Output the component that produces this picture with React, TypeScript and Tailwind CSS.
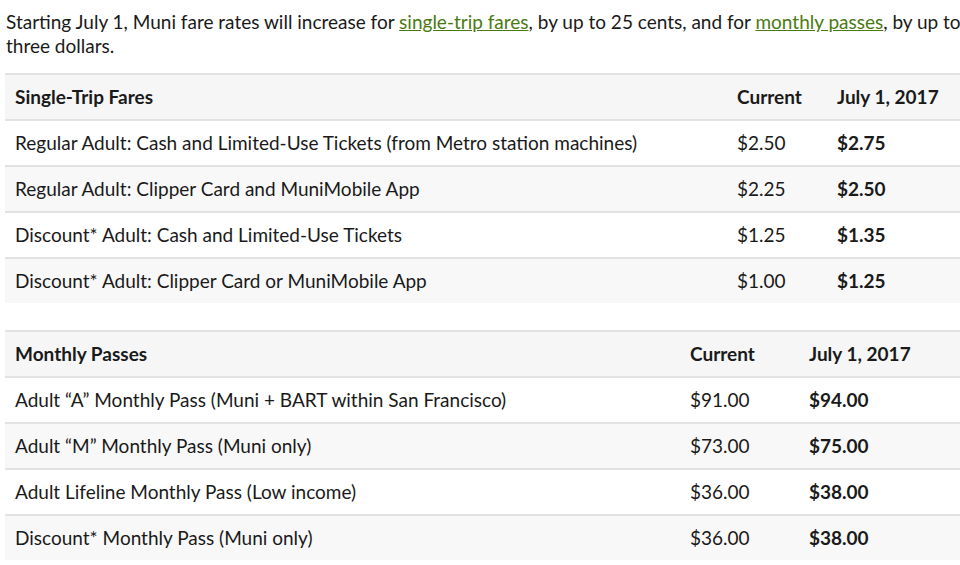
import React from "react";

const font = { fontFamily: "Lato, 'Noto Sans', sans-serif" };

type Row = [string, string, string];

const single: Row[] = [
  ["Regular Adult: Cash and Limited-Use Tickets (from Metro station machines)", "$2.50", "$2.75"],
  ["Regular Adult: Clipper Card and MuniMobile App", "$2.25", "$2.50"],
  ["Discount* Adult: Cash and Limited-Use Tickets", "$1.25", "$1.35"],
  ["Discount* Adult: Clipper Card or MuniMobile App", "$1.00", "$1.25"],
];

const monthly: Row[] = [
  ["Adult \u201cA\u201d Monthly Pass (Muni + BART within San Francisco)", "$91.00", "$94.00"],
  ["Adult \u201cM\u201d Monthly Pass (Muni only)", "$73.00", "$75.00"],
  ["Adult Lifeline Monthly Pass (Low income)", "$36.00", "$38.00"],
  ["Discount* Monthly Pass (Muni only)", "$36.00", "$38.00"],
];

function FareTable({ title, rows, w1, w2 }: { title: string; rows: Row[]; w1: string; w2: string }) {
  return (
    <div className="ml-[5px] w-[975px]">
      <div className="flex h-[46px] items-center border-t-2 border-[#e2e2e2] bg-[#f6f6f6] font-bold">
        <div className={`${w1} pl-[10px]`}>{title}</div>
        <div className={`${w2} pl-[10px]`}>Current</div>
        <div className="flex-1 pl-[10px]">July 1, 2017</div>
      </div>
      {rows.map((r, i) => (
        <div
          key={i}
          className={`flex h-[46px] items-center border-t-2 border-[#e2e2e2] ${i % 2 === 1 ? "bg-[#f8f8f8]" : "bg-white"}`}
        >
          <div className={`${w1} pl-[10px]`}>{r[0]}</div>
          <div className={`${w2} pl-[10px]`}>{r[1]}</div>
          <div className="flex-1 pl-[10px] font-bold">{r[2]}</div>
        </div>
      ))}
    </div>
  );
}

export default function App() {
  return (
    <div className="w-[960px] h-[565px] overflow-hidden bg-white text-[19px] text-[#1a1a1a]" style={font}>
      <p className="pl-[6px] pt-[10px] leading-[24px] mb-[15px] whitespace-nowrap">
        Starting July 1, Muni fare rates will increase for{" "}
        <a className="text-[#4b7a12] underline" href="#">single-trip fares</a>, by up to 25 cents, and for{" "}
        <a className="text-[#4b7a12] underline" href="#">monthly passes</a>, by up to
        <br />
        three dollars.
      </p>
      <FareTable title="Single-Trip Fares" rows={single} w1="w-[722px]" w2="w-[100px]" />
      <div className="h-[27px]" />
      <FareTable title="Monthly Passes" rows={monthly} w1="w-[675px]" w2="w-[119px]" />
    </div>
  );
}
